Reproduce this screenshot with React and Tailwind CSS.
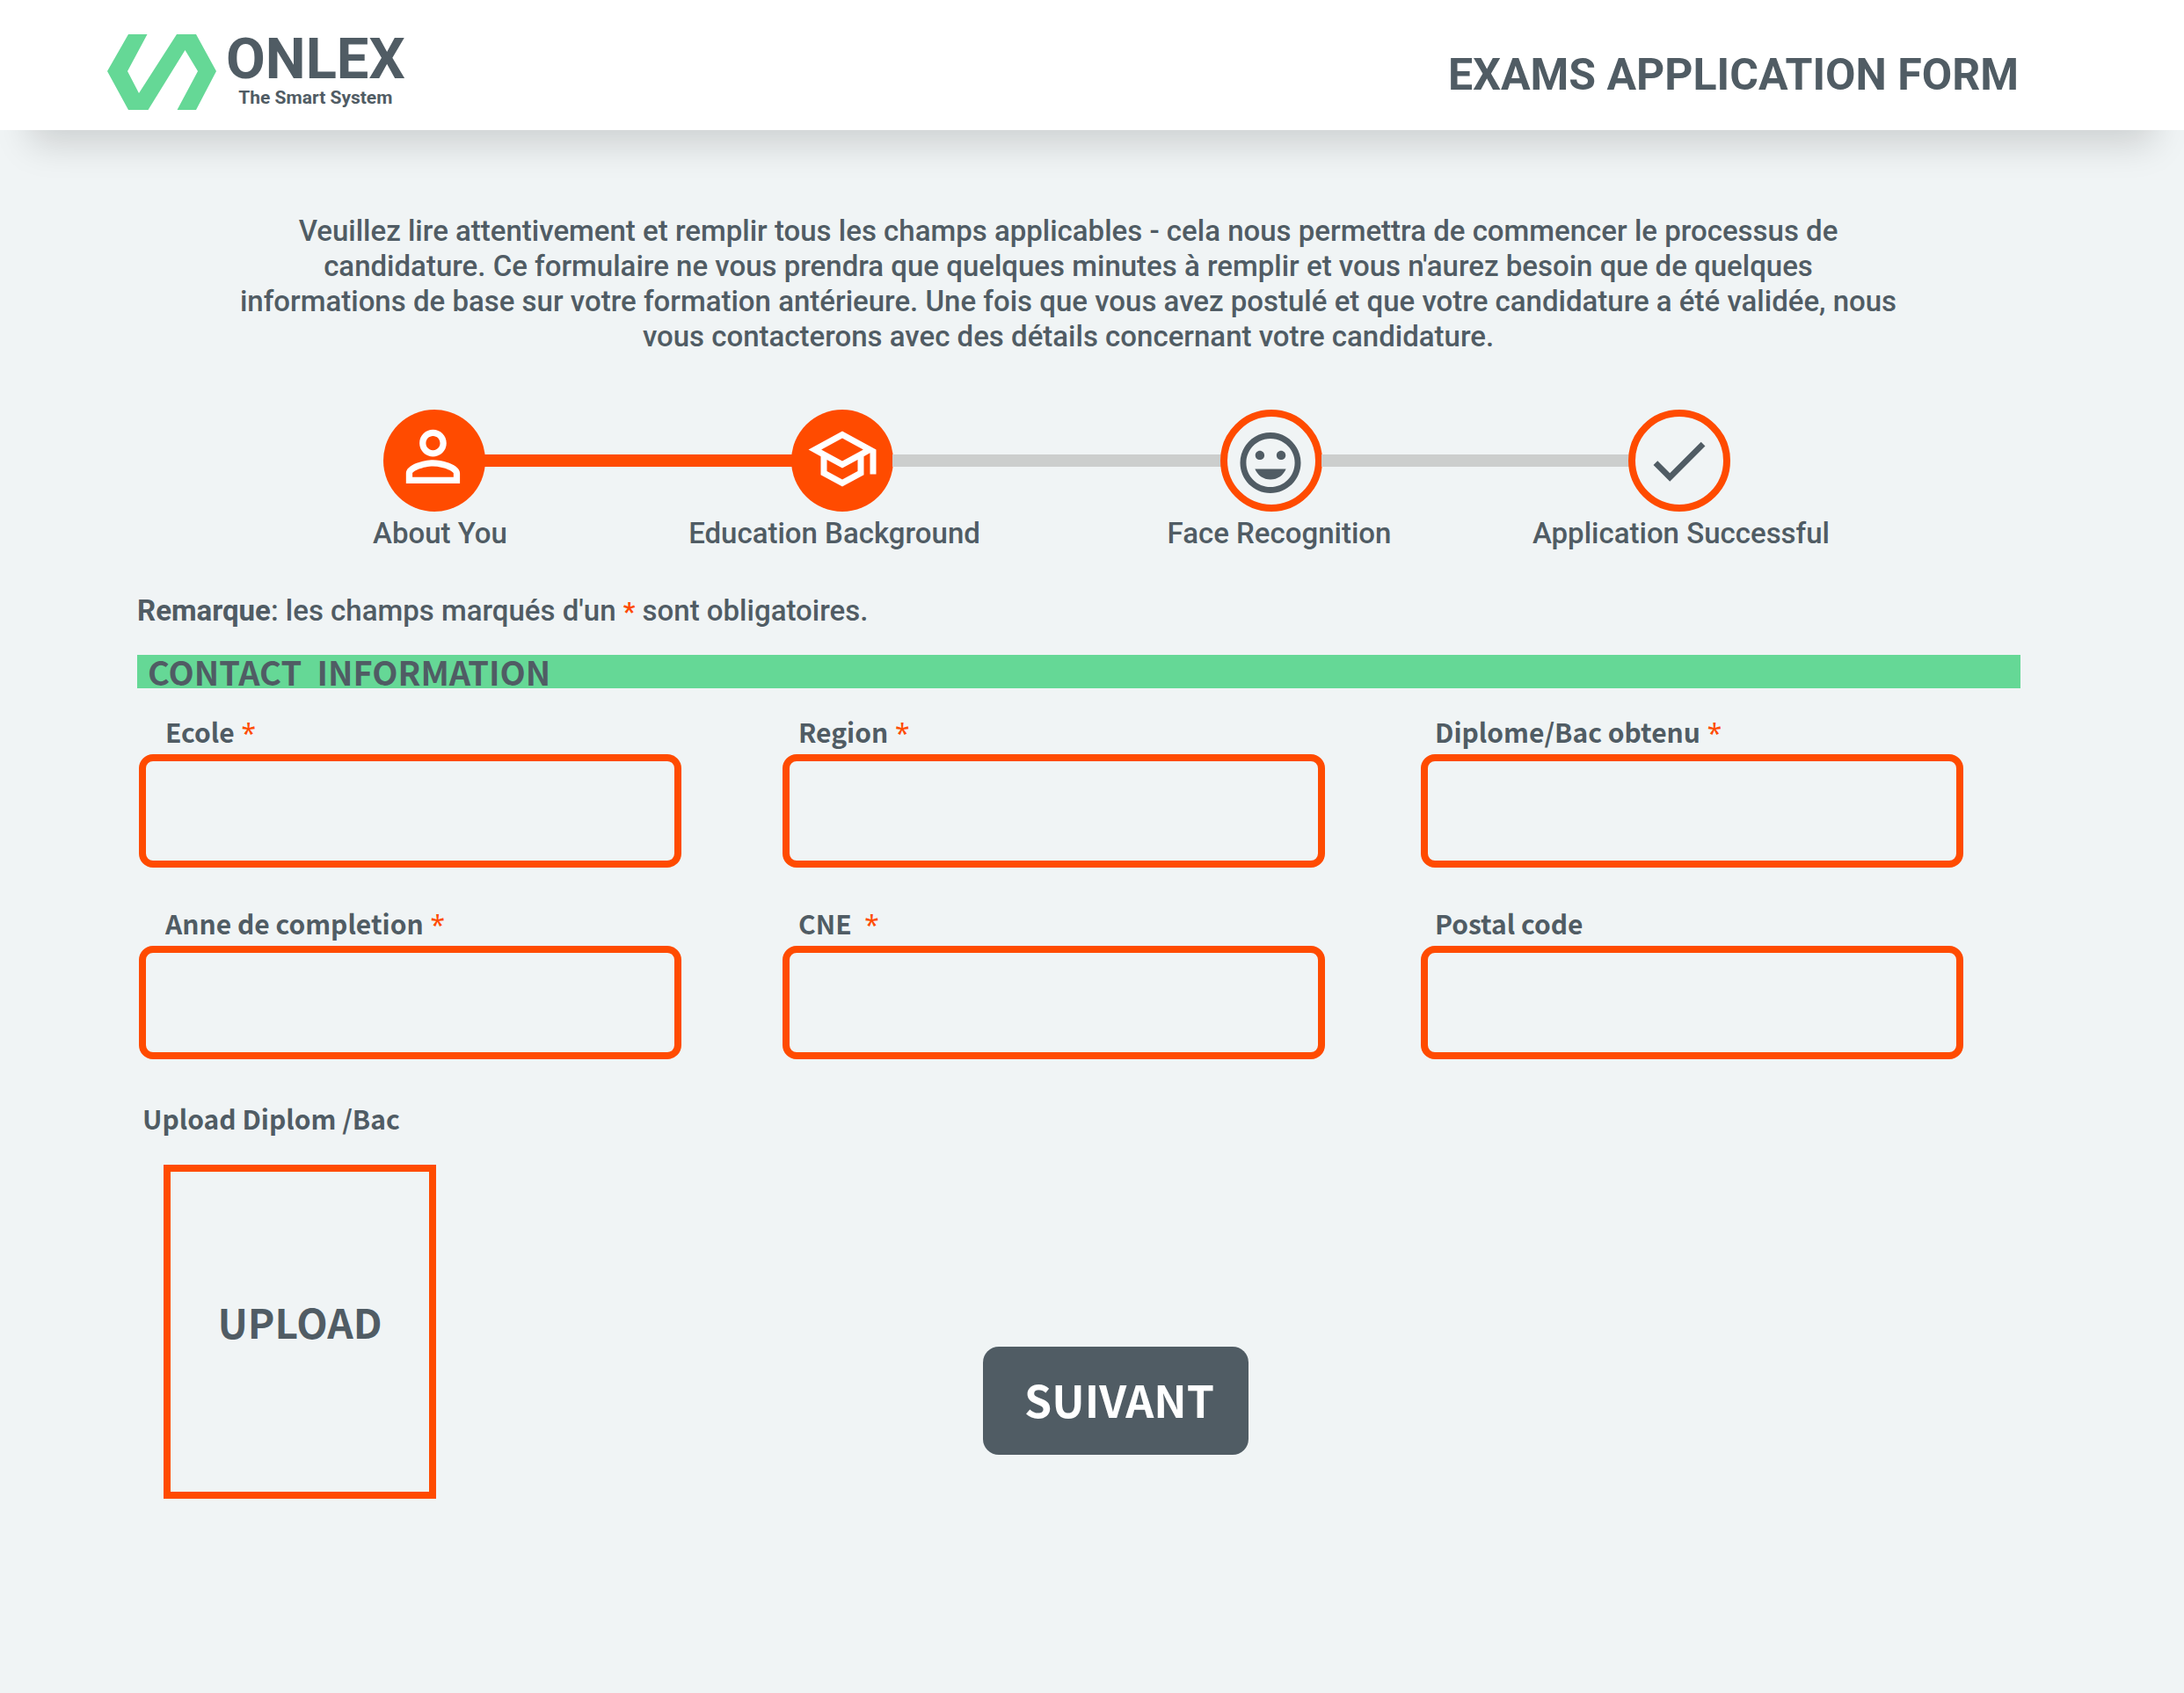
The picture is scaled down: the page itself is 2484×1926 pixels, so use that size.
const ROBOTO = "font-['Roboto','Liberation_Sans',sans-serif]";
const HUMANIST = "font-['Noto_Sans_CJK_SC','Noto_Sans',sans-serif]";

const PERSON =
  "M12 5.9c1.16 0 2.1.94 2.1 2.1s-.94 2.1-2.1 2.1S9.9 9.16 9.9 8s.94-2.1 2.1-2.1m0 9c2.97 0 6.1 1.46 6.1 2.1v1.1H5.9V17c0-.64 3.13-2.1 6.1-2.1M12 4C9.79 4 8 5.79 8 8s1.79 4 4 4 4-1.79 4-4-1.79-4-4-4zm0 9c-2.67 0-8 1.34-8 4v3h16v-3c0-2.66-5.33-4-8-4z";
const SCHOOL =
  "M12 3L1 9l4 2.18v6L12 21l7-3.82v-6l2-1.09V17h2V9L12 3zm6.82 6L12 12.72 5.18 9 12 5.28 18.82 9zM17 15.99l-5 2.73-5-2.73v-3.72L12 15l5-2.73v3.72z";
const MOOD =
  "M11.99 2C6.47 2 2 6.48 2 12s4.47 10 9.99 10C17.52 22 22 17.52 22 12S17.52 2 11.99 2zM12 20c-4.42 0-8-3.58-8-8s3.58-8 8-8 8 3.58 8 8-3.58 8-8 8zm3.5-9c.83 0 1.5-.67 1.5-1.5S16.33 8 15.5 8 14 8.67 14 9.5s.67 1.5 1.5 1.5zm-7 0c.83 0 1.5-.67 1.5-1.5S9.33 8 8.5 8 7 8.67 7 9.5 7.67 11 8.5 11zm3.5 6.5c2.33 0 4.31-1.46 5.11-3.5H6.89c.8 2.04 2.78 3.5 5.11 3.5z";
const CHECK = "M9 16.17L4.83 12l-1.42 1.41L9 19 21 7l-1.41-1.41z";

function StepIcon({ path, transform, done }) {
  return (
    <svg viewBox="0 0 116 116" className="size-[116px] shrink-0" aria-hidden="true">
      {done ? (
        <circle cx="58" cy="58" r="58" fill="#ff4b00" />
      ) : (
        <circle cx="58" cy="58" r="54" fill="#f0f4f5" stroke="#ff4b00" strokeWidth="8" />
      )}
      <path d={path} transform={transform} fill={done ? "#ffffff" : "#505c64"} />
    </svg>
  );
}

function Stepper() {
  return (
    <section aria-label="Progression" className="mt-[63px]">
      <div className="flex items-center pr-[330px] pl-[280px]">
        <StepIcon done path={PERSON} transform="translate(10.5 7.5) scale(3.83)" />
        <div className="-mx-px h-[14px] flex-[348] bg-[#ff4b00]" />
        <StepIcon done path={SCHOOL} transform="translate(16 14) scale(3.5)" />
        <div className="-mx-px h-[14px] flex-[372] bg-[#cccecd]" />
        <StepIcon path={MOOD} transform="translate(15.6 19.1) scale(3.45)" />
        <div className="-mx-px h-[14px] flex-[348] bg-[#cccecd]" />
        <StepIcon path={CHECK} transform="translate(17.1 18) scale(3.35)" />
      </div>
      <ol className="mt-[5px] grid grid-cols-[421fr_476fr_536fr_378fr] pr-[197px] pl-[134px] text-center text-[33px] leading-[40px] font-medium">
        <li>About You</li>
        <li>Education Background</li>
        <li>Face Recognition</li>
        <li>Application Successful</li>
      </ol>
    </section>
  );
}

const FIELDS = [
  { id: "ecole", label: "Ecole", required: true, pad: "pl-[30px]" },
  { id: "region", label: "Region", required: true, pad: "pl-[18px]" },
  { id: "diplome", label: "Diplome/Bac obtenu", required: true, pad: "pl-4" },
  { id: "annee", label: "Anne de completion", required: true, pad: "pl-[30px]" },
  { id: "cne", label: "CNE ", required: true, pad: "pl-[18px]" },
  { id: "postal", label: "Postal code", required: false, pad: "pl-4" },
];

function Field({ id, label, required, pad }) {
  return (
    <div className="flex max-w-[617px] flex-col gap-[6px]">
      <label htmlFor={id} className={`${pad} h-10 text-[30px] leading-[40px] font-bold whitespace-pre`}>
        {label}
        {required && (
          <span className="font-['Noto_Sans',sans-serif] font-normal text-[#ff4b00]"> *</span>
        )}
      </label>
      <input
        id={id}
        name={id}
        type="text"
        required={required}
        className="h-[129px] w-full rounded-2xl border-8 border-[#ff4b00] bg-transparent px-6 text-[30px] shadow-none outline-none"
      />
    </div>
  );
}

export default function App() {
  return (
    <div className={`min-h-screen bg-[#f0f4f5] text-[#505c64] ${ROBOTO}`}>
      <header className="flex h-[148px] items-center justify-between bg-white pr-[188px] pl-[122px] shadow-[0_50px_42px_-34px_rgba(0,0,0,0.15)]">
        <div className="flex items-center gap-[11px] pt-4">
          <svg viewBox="0 0 124 86" className="h-[86px] w-[124px]" aria-hidden="true">
            <path
              d="M24 0H45.500L23 42L36 67L79 0H101L124 42L101 86H79.500L103 42L88.500 18L46.500 86H24L0 42Z"
              fill="#65d896"
            />
          </svg>
          <div className="flex flex-col items-center pb-[6px]">
            <span className="text-[65px] leading-[64px] font-bold">ONLEX</span>
            <span className="text-[21px] leading-[24px] font-bold">The Smart System</span>
          </div>
        </div>
        <h1 className="mt-[21px] text-[50px] leading-[60px] font-bold">EXAMS APPLICATION FORM</h1>
      </header>

      <main className="pt-[95px] pr-[186px] pb-[200px] pl-[156px]">
        <p className="mr-[123px] ml-[99px] text-center text-[33px] leading-[40px] font-medium">
          Veuillez lire attentivement et remplir tous les champs applicables - cela nous permettra de
          commencer le processus de
          <br />
          candidature. Ce formulaire ne vous prendra que quelques minutes à remplir et vous n'aurez
          besoin que de quelques
          <br />
          informations de base sur votre formation antérieure. Une fois que vous avez postulé et que
          votre candidature a été validée, nous
          <br />
          vous contacterons avec des détails concernant votre candidature.
        </p>

        <Stepper />

        <p className="mt-12 text-[33px] leading-[40px] font-medium">
          <strong className="font-bold">Remarque</strong>: les champs marqués d'un{" "}
          <span className="text-[30px] leading-none font-bold text-[#ff4b00]">*</span> sont obligatoires.
        </p>

        <form className={`mt-[30px] ${HUMANIST}`}>
          <h2 className="bg-[#65d896] pl-3 text-[38px] leading-[38px] font-bold whitespace-pre">
            CONTACT  INFORMATION
          </h2>

          <div className="mt-[29px] grid grid-cols-[732fr_726fr_617fr] gap-y-[43px] pr-[65px] pl-[2px]">
            {FIELDS.map((field) => (
              <Field key={field.id} {...field} />
            ))}
          </div>

          <div id="upload-label" className="mt-[47px] pl-[6px] text-[30px] leading-[40px] font-bold">
            Upload Diplom /Bac
          </div>
          <div className="mt-[33px] flex items-end gap-[622px] pl-[30px]">
            <button
              type="button"
              aria-describedby="upload-label"
              className="h-[380px] w-[310px] border-8 border-[#ff4b00] pb-6 text-[46px] font-bold"
            >
              UPLOAD
            </button>
            <button
              type="submit"
              className="mb-[50px] h-[123px] w-[302px] rounded-[18px] bg-[#505c64] pb-[6px] pl-2 text-[50px] leading-[60px] font-bold text-white"
            >
              SUIVANT
            </button>
          </div>
        </form>
      </main>
    </div>
  );
}
